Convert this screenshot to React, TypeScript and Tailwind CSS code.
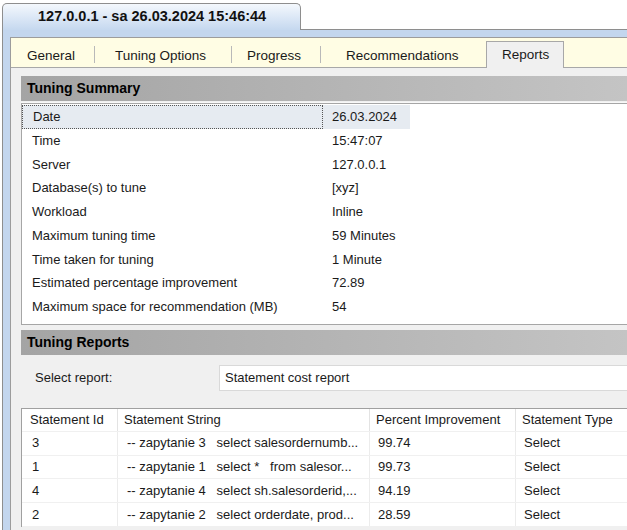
import React from "react";

const summary: [string, string][] = [
  ["Date", "26.03.2024"],
  ["Time", "15:47:07"],
  ["Server", "127.0.0.1"],
  ["Database(s) to tune", "[xyz]"],
  ["Workload", "Inline"],
  ["Maximum tuning time", "59 Minutes"],
  ["Time taken for tuning", "1 Minute"],
  ["Estimated percentage improvement", "72.89"],
  ["Maximum space for recommendation (MB)", "54"],
];

const statements = [
  { id: "3", text: "-- zapytanie 3   select salesordernumb...", pct: "99.74", type: "Select" },
  { id: "1", text: "-- zapytanie 1   select *   from salesor...", pct: "99.73", type: "Select" },
  { id: "4", text: "-- zapytanie 4   select sh.salesorderid,...", pct: "94.19", type: "Select" },
  { id: "2", text: "-- zapytanie 2   select orderdate, prod...", pct: "28.59", type: "Select" },
];

function SectionHeader({ title }: { title: string }) {
  return (
    <div className="h-[25px] flex items-center pl-[6px] bg-gradient-to-r from-[#a4a4a4] to-[#c4c4c4] text-[14px] font-bold text-black">
      {title}
    </div>
  );
}

function Sep() {
  return <div className="w-px h-[17px] bg-[#b9b9b9] self-center mt-[4px]" />;
}

export default function App() {
  return (
    <div className="w-[627px] h-[530px] overflow-hidden bg-white flex flex-col font-['Liberation_Sans',Arial,sans-serif] text-[13px] text-[#1a1a1a]">
      {/* document tab */}
      <div className="h-[30px] flex items-end shrink-0">
        <div className="ml-[2px] w-[299px] h-[27px] rounded-t-[5px] border border-b-0 border-[#8e8e8e] bg-gradient-to-b from-[#f4f8fd] to-[#c5d8ef] flex items-center pl-[35px] font-bold text-[14.5px] text-[#111]">
          127.0.0.1 - sa 26.03.2024 15:46:44
        </div>
        <div className="flex-1 border-b border-[#8e8e8e] h-px" />
      </div>

      {/* frame */}
      <div className="flex-1 ml-[2px] border-l border-[#8e8e8e] bg-[#c3d6ee] pl-[7px] pt-[7px] flex flex-col">
        <div className="flex-1 border-l border-t border-[#9c9c9c] bg-[#f0f0f0] flex flex-col">
          {/* tab strip */}
          <div className="h-[30px] bg-[#fffde4] flex items-end border-b border-[#a8a8a8] text-[13.5px]">
            <div className="w-[83px] h-full flex items-center pt-[7px] pl-[16px]">General</div>
            <Sep />
            <div className="w-[136px] h-full flex items-center pt-[7px] pl-[20px]">Tuning Options</div>
            <Sep />
            <div className="w-[88px] h-full flex items-center pt-[7px] pl-[15px]">Progress</div>
            <Sep />
            <div className="w-[165px] h-full flex items-center pt-[7px] pl-[25px]">Recommendations</div>
            <div className="w-[78px] h-[27px] -mb-px bg-[#f0f0f0] border border-b-0 border-[#a8a8a8] flex items-center pl-[15px]">
              Reports
            </div>
          </div>

          {/* content */}
          <div className="pl-[10px] pt-[8px] flex flex-col">
            <SectionHeader title="Tuning Summary" />
            <div className="mt-px border-t border-[#f8f8f8]">
              <div className="border border-r-0 border-[#a6a6a6] bg-white pt-px pb-[5px]">
                {summary.map(([label, value], i) => (
                  <div key={label} className="h-[23.75px] flex">
                    <div
                      className={
                        i === 0
                          ? "w-[301px] flex items-center pl-[10px] bg-[#e6ebf1] border border-dotted border-[#555]"
                          : "w-[301px] flex items-center pl-[10px]"
                      }
                    >
                      {label}
                    </div>
                    <div
                      className={
                        i === 0
                          ? "w-[87px] flex items-center pl-[9px] bg-[#e6ebf1]"
                          : "flex items-center pl-[9px]"
                      }
                    >
                      {value}
                    </div>
                  </div>
                ))}
              </div>
            </div>

            <div className="mt-[5px]">
              <SectionHeader title="Tuning Reports" />
            </div>

            <div className="mt-[10px] mb-[17px] h-[26px] flex items-center">
              <div className="w-[198px] pl-[14px]">Select report:</div>
              <div className="flex-1 h-[26px] bg-white border border-[#d9d9d9] border-r-0 flex items-center pl-[5px]">
                Statement cost report
              </div>
            </div>

            {/* grid */}
            <div className="border-t border-l border-[#a0a0a0] bg-white">
              <div className="h-[23px] flex border-b border-[#f0f0f0]">
                <div className="w-[96px] shrink-0 flex items-center pl-[8px] border-r border-[#e3e3e3]">Statement Id</div>
                <div className="w-[252px] shrink-0 flex items-center pl-[6px] border-r border-[#e3e3e3]">Statement String</div>
                <div className="w-[146px] shrink-0 flex items-center pl-[6px] border-r border-[#e3e3e3]">Percent Improvement</div>
                <div className="flex-1 flex items-center pl-[6px] whitespace-nowrap">Statement Type</div>
              </div>
              {statements.map((s) => (
                <div key={s.id} className="h-[23.75px] flex border-b border-[#f0f0f0]">
                  <div className="w-[96px] shrink-0 flex items-center pl-[10px] border-r border-[#ececec]">{s.id}</div>
                  <div className="w-[252px] shrink-0 flex items-center pl-[9px] border-r border-[#ececec] whitespace-pre overflow-hidden">
                    {s.text}
                  </div>
                  <div className="w-[146px] shrink-0 flex items-center pl-[8px] border-r border-[#ececec]">{s.pct}</div>
                  <div className="flex-1 flex items-center pl-[8px]">{s.type}</div>
                </div>
              ))}
            </div>
          </div>
        </div>
      </div>
    </div>
  );
}
